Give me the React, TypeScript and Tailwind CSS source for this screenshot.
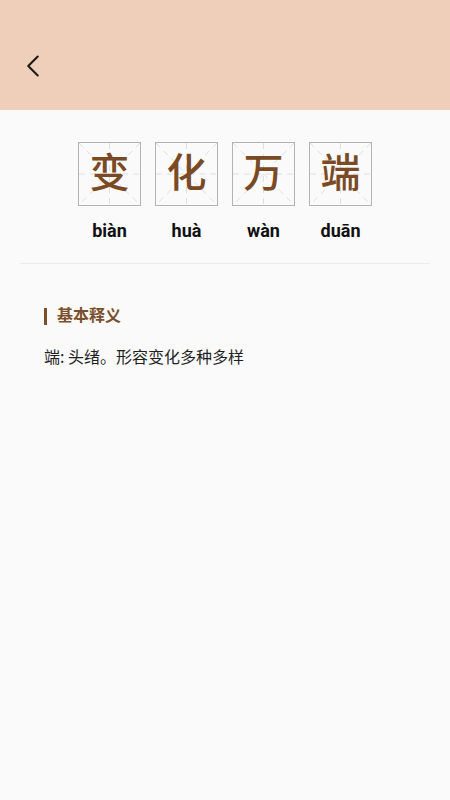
import { ChevronLeft } from "lucide-react";

const WORDS = [
	{ char: "变", pinyin: "biàn" },
	{ char: "化", pinyin: "huà" },
	{ char: "万", pinyin: "wàn" },
	{ char: "端", pinyin: "duān" },
];

const FONT = { fontFamily: 'Roboto, "Noto Sans CJK SC", sans-serif' };
const CJK = { fontFamily: '"Noto Sans CJK SC", sans-serif' };

function GridBox({ char }: { char: string }) {
	return (
		<div className="relative h-[64px] w-[63px] border border-[#b3b3b3] bg-[#fafafa]">
			<svg className="absolute inset-0 h-full w-full" viewBox="0 0 62 62" preserveAspectRatio="none">
				<g stroke="#d6d6d6" strokeWidth="0.8" strokeDasharray="6 5" fill="none">
					<line x1="31" y1="0" x2="31" y2="62" />
					<line x1="0" y1="31" x2="62" y2="31" />
					<line x1="0" y1="0" x2="62" y2="62" />
					<line x1="62" y1="0" x2="0" y2="62" />
				</g>
			</svg>
			<span className="relative flex h-full w-full items-center justify-center text-[40px] font-medium leading-none text-[#7a4a24]">
				{char}
			</span>
		</div>
	);
}

export default function App() {
	return (
		<main className="min-h-[800px] bg-[#fafafa]" style={FONT}>
			<header className="flex h-[110px] items-center bg-[#efcfb9] pl-[14px] pt-[22px]">
				<ChevronLeft className="h-[38px] w-[38px] text-[#1a1a1a]" strokeWidth={1.3} />
			</header>

			<section className="flex justify-center gap-[14px] pt-[32px]">
				{WORDS.map((w) => (
					<div key={w.char} className="flex flex-col items-center">
						<GridBox char={w.char} />
						<p className="mt-[13px] text-[18px] font-bold leading-[24px] text-[#111]">{w.pinyin}</p>
					</div>
				))}
			</section>

			<div className="mx-[20px] mt-[20px] h-px bg-[#ececec]" />

			<section className="px-[44px] pt-[41px]">
				<h2 className="flex items-center gap-[10px] text-[16px] font-bold leading-[22px] text-[#7b4f2c]">
					<span className="h-[17px] w-[3px] bg-[#7b4f2c]" />
					基本释义
				</h2>
				<p className="mt-[18px] text-[16px] leading-[22px] text-[#1f1f1f]" style={CJK}>
					端: 头绪。形容变化多种多样
				</p>
			</section>
		</main>
	);
}
